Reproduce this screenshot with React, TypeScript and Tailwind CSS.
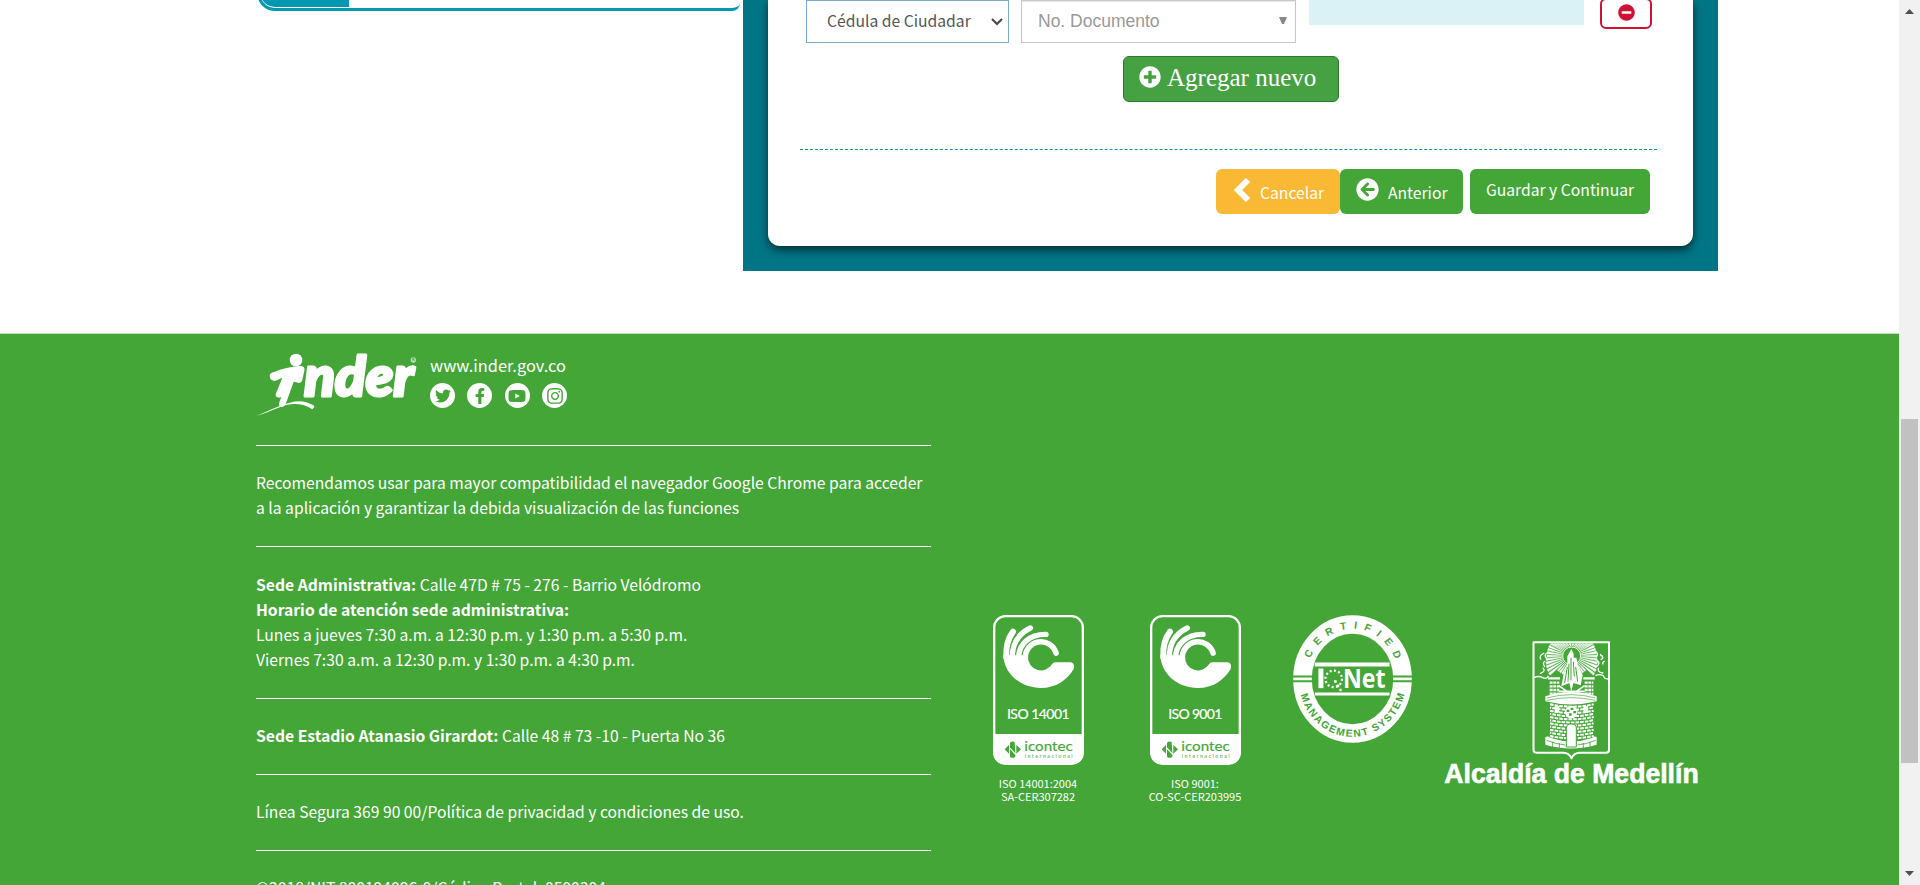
import React from "react";
import {
  FaArrowCircleLeft,
  FaFacebookF,
  FaInstagram,
  FaMinusCircle,
  FaPlusCircle,
  FaTwitter,
  FaYoutube,
} from "react-icons/fa";

const GREEN = "#43a637";

function InderLogo() {
  return (
    <svg className="h-[65px] w-[161px] overflow-visible" viewBox="47 65 483 195" fill="#fff">
      <circle cx="167" cy="89" r="19" />
      <path d="M88 135Q90 126 104 124Q138 110 176 107Q196 106 192 122L186 148Q182 162 168 156L160 154L138 216Q134 230 122 230Q114 228 117 216L123 200Q106 206 106 192L126 142L104 152Q88 152 88 135Z" />
      <path d="M48 257C95 237 145 211 182 213C205 216 224 226 222 230L216 237C190 218 150 216 118 231C92 242 68 251 48 257Z" />
      <text
        x="192"
        y="196"
        textLength="328"
        lengthAdjust="spacingAndGlyphs"
        fontFamily="Lato, sans-serif"
        fontWeight="900"
        fontStyle="italic"
        fontSize="163"
        stroke="#fff"
        strokeWidth="9"
        strokeLinejoin="round"
      >
        nder
      </text>
      <circle cx="519" cy="89" r="8" fillOpacity=".65" />
      <text x="519" y="93" textAnchor="middle" fontFamily="Liberation Sans, sans-serif" fontWeight="700" fontSize="11" fill={GREEN}>
        R
      </text>
    </svg>
  );
}

function IcontecSeal({ label, labelWidth }: { label: string; labelWidth: number }) {
  return (
    <svg className="h-[150px] w-[91px]" viewBox="67 45 273 450">
      <rect x="70.5" y="48.5" width="266" height="443" rx="34" fill="none" stroke="#fff" strokeWidth="7" />
      <path d="M70 402H337V458Q337 492 303 492H104Q70 492 70 458Z" fill="#fff" />
      <path
        d="M98 165C100 222 150 264 211 264C255 264 290 240 309 207Q314 188 298 187H252Q247 188 244 193A39 39 0 0 1 172 171L158 166Z"
        fill="#fff"
      />
      <g fill="none" stroke="#fff" strokeLinecap="round">
        <path d="M107 172C105 140 112 115 127 95" strokeWidth="18" />
        <path d="M125 174C124 132 142 102 179 84" strokeWidth="16" />
        <path d="M144 176C142 132 178 102 226 103" strokeWidth="16" />
        <path d="M164 175A47 47 0 0 1 256 159" strokeWidth="17" />
      </g>
      <text
        x="203"
        y="357"
        textAnchor="middle"
        textLength={labelWidth}
        fontFamily="Lato, sans-serif"
        fontSize="42"
        fill="#fff"
        stroke="#fff"
        strokeWidth=".6"
      >
        {label}
      </text>
      <g fill={GREEN}>
        <path d="M102 448L115 435V461Z" />
        <path d="M118 428Q126 421 132 427L134 460L118 442Z" />
        <path d="M118 447L134 465V470Q126 477 118 470Z" />
        <path d="M137 435L151 448L137 461Z" />
        <text
          x="161"
          y="453"
          textLength="145"
          lengthAdjust="spacingAndGlyphs"
          fontFamily="Lato, sans-serif"
          fontSize="39"
          stroke={GREEN}
          strokeWidth=".5"
        >
          icontec
        </text>
        <text x="162" y="474" textLength="144" fontFamily="Lato, sans-serif" fontSize="16" fontWeight="700" fillOpacity=".75">
          internacional
        </text>
      </g>
    </svg>
  );
}

function IqNetSeal() {
  return (
    <svg className="h-[128px] w-[119px]" viewBox="40 44 357 385">
      <ellipse cx="218.500" cy="236.500" rx="150.500" ry="164" fill="none" stroke="#fff" strokeWidth="56" />
      <path d="M38 229H100M38 243H100M338 229H400M338 243H400" stroke={GREEN} strokeWidth="6" />
      <path d="M105 193H330" stroke="#fff" strokeWidth="12" />
      <path d="M105 281.500H330" stroke="#fff" strokeWidth="9" />
      <defs>
        <path id="seal-top" d="M79.500 236.500A139 151 0 0 1 357.500 236.500" />
        <path id="seal-bottom" d="M56.500 236.500A162 174 0 0 0 380.500 236.500" />
      </defs>
      <g fill={GREEN} fontFamily="Liberation Sans, sans-serif" fontWeight="700" fontSize="31" textAnchor="middle">
        <text letterSpacing="21">
          <textPath href="#seal-top" startOffset="52.500%">CERTIFIED</textPath>
        </text>
        <text letterSpacing="4.500">
          <textPath href="#seal-bottom" startOffset="50.5%">MANAGEMENT SYSTEM</textPath>
        </text>
      </g>
      <g fill="#fff" fontFamily="Open Sans, sans-serif" fontWeight="700" fontSize="82">
        <rect x="116" y="205" width="15" height="59" />
        <text x="190" y="264" textLength="128" lengthAdjust="spacingAndGlyphs">Net</text>
      </g>
      <circle cx="162" cy="236" r="25" fill="none" stroke="#fff" strokeWidth="7" strokeDasharray="6 7.080" />
      <path d="M163 240h8v8h-8zM171 253h8v8h-8zM179 266h7v7h-7z" fill="#fff" />
    </svg>
  );
}

const RAYS = Array.from({ length: 46 }, (_, i) => {
  const a = (i / 46) * Math.PI * 2;
  const s = Math.sin(a);
  const r = s > 0.7 ? 60 : 74 + 20 * Math.max(0, s);
  const spread = 0.042;
  const y = (angle: number) => Math.max(70, 107 + r * Math.sin(angle));
  return `M${425 + 29 * Math.cos(a)} ${107 + 29 * s}L${425 + r * Math.cos(a - spread)} ${y(a - spread)}L${425 + r * Math.cos(a + spread)} ${y(a + spread)}Z`;
}).join("");

const BRICKS = Array.from({ length: 11 }, (_, i) => i);

function MedellinCrest() {
  return (
    <svg className="h-[144px] w-[255px] overflow-visible" viewBox="42 62 765 432">
      <path
        d="M310.500 66H537V388Q537 397 528 397H449Q432 397 424.500 414Q417 397 400 397H320Q310.500 397 310.500 388Z"
        fill="none"
        stroke="#fff"
        strokeWidth="6"
        strokeLinejoin="round"
      />
      <path d={RAYS} fill="#fff" stroke="#fff" strokeWidth="1.500" />
      <circle cx="425" cy="107" r="27" fill={GREEN} stroke="#fff" strokeWidth="3" />
      <path d="M424 86L431 100V112L439 112L444 135L458 165L452 195L430 188L424 214L418 188L394 198L400 165L412 130V108Z" fill="#fff" />
      <path d="M423 112V180M412 140L404 188M437 140L443 184M430 124L433 168M417 130L414 184" stroke={GREEN} strokeWidth="3" />
      <g fill="none" stroke="#fff" strokeWidth="4">
        <path d="M313 172Q325 165 338 172Q350 178 355 166M330 160Q350 152 338 142M345 140Q335 128 346 122M350 115Q340 103 352 98M333 118Q325 105 343 98" />
        <path d="M536 176Q523 177 520 166Q508 160 496 166M520 158Q500 156 506 142M500 138Q514 128 500 120M512 118Q526 112 510 102M498 112Q508 98 494 92M524 122Q514 128 520 132" />
      </g>
      <g stroke="#fff" strokeWidth="5">
        <path d="M354 174H390M460 174H494" strokeWidth="7" />
        <path d="M359 187H388M359 198H388M359 209H388M359 220H388M464 187H490M464 198H490M464 209H490M464 220H490" strokeWidth="7" strokeDasharray="9 2" />
        <path d="M386 196L412 214M438 214L464 196M386 213H464" />
      </g>
      <path d="M346 228Q424 202 500 228V243Q424 262 346 243Z" fill="#fff" />
      <path d="M350 233Q424 213 496 233M350 240Q424 224 496 240" fill="none" stroke={GREEN} strokeWidth="2" />
      <g fill="none" stroke="#fff" strokeWidth="6">
        {BRICKS.map((i) => (
          <path key={i} d={`M360 ${252 + i * 9.5}Q424 ${266 + i * 9.5} 491 ${252 + i * 9.5}`} strokeDasharray="11 3" strokeDashoffset={i % 2 ? 7 : 0} />
        ))}
      </g>
      <g fill="#fff">
        <path d="M374 257h14v20h-14zM460 257h14v20h-14z" />
        <circle cx="424" cy="275" r="19" />
        <path d="M346 350Q354 346 361 352Q424 374 488 352Q494 346 500 350V373Q424 396 346 373Z" />
        <path d="M409 380V322Q410 311 424 311Q438 311 439 322V380Z" stroke={GREEN} strokeWidth="3" />
      </g>
      <path d="M410 268h8v7h-8zM422 262h8v7h-8zM430 272h8v7h-8zM417 279h8v7h-8z" fill={GREEN} />
      <path d="M350 360Q380 372 406 374M442 374Q470 372 497 360M368 364V380M388 368V384M460 368V384M480 364V380" fill="none" stroke={GREEN} strokeWidth="2.500" />
      <text
        x="43"
        y="487"
        textLength="763"
        lengthAdjust="spacingAndGlyphs"
        fontFamily="Liberation Sans, sans-serif"
        fontWeight="700"
        fontSize="84"
        fill="#fff"
        stroke="#fff"
        strokeWidth="2"
      >
        Alcaldía de Medellín
      </text>
    </svg>
  );
}

function SocialIcon({ children }: { children: React.ReactNode }) {
  return (
    <a className="flex size-[25px] items-center justify-center rounded-full bg-white text-[#43a637]">{children}</a>
  );
}

function FormPanel() {
  return (
    <section className="h-[271px] w-[975px] bg-[#007585] pr-[25px] pl-[25px]">
      <div className="h-[246px] rounded-b-[12px] bg-white pr-[36px] pl-8 shadow-[0_4px_9px_rgba(0,0,0,0.6)]">
        <div className="flex h-[43px] items-start pl-[6px]">
          <div className="flex h-[43px] w-[203px] shrink-0 items-center justify-between border border-[#7aaccb] pr-[5px] pl-5 text-[#555]">
            <span className="relative -top-px text-[15.7px] whitespace-nowrap">Cédula de Ciudadar</span>
            <svg className="h-[8px] w-[12px]" viewBox="0 0 12 8" fill="none" stroke="#444" strokeWidth="2">
              <path d="M1 1L6 6L11 1" />
            </svg>
          </div>
          <div className="ml-3 flex h-[43px] w-[275px] shrink-0 items-center justify-between border border-[#c8c8c8] pr-[8px] pl-4 font-['Liberation_Sans',sans-serif] shadow-[inset_0_1px_1px_rgba(0,0,0,0.1)]">
            <span className="text-[17.5px] text-[#999]">No. Documento</span>
            <svg className="relative -top-px h-[7px] w-[8px]" viewBox="0 0 8 7">
              <path d="M0 0H8L5 7H3Z" fill="#888" />
            </svg>
          </div>
          <div className="ml-[13px] h-[25px] w-[275px] shrink-0 bg-[#daf2f6]" />
          <button className="ml-4 -mt-[2px] flex h-[31px] w-[52px] shrink-0 items-center justify-center rounded-[6px] border-2 border-[#d01035] text-[#d01035]">
            <FaMinusCircle className="relative -top-px size-[17px]" />
          </button>
        </div>
        <button className="mt-[13px] ml-[323px] flex h-[46px] w-[216px] items-center gap-[6px] rounded-[6px] border border-[#2b7a2b] bg-[#46a143] pb-[3px] pl-[15px] font-['Liberation_Serif',serif] text-[25px] text-white">
          <FaPlusCircle className="relative -top-px size-[22px]" />
          <span className="whitespace-nowrap">Agregar nuevo</span>
        </button>
        <div className="mt-[47px] border-t border-dashed border-[#0398ae]" />
        <div className="mt-[19px] flex justify-end pr-[7px] text-[15.7px] text-white">
          <button className="flex h-[45px] w-[124px] items-center rounded-[6px] bg-[#f9b935] pl-[18px]">
            <svg className="relative -top-[2px] h-[24px] w-[17px]" viewBox="0 0 17 24" fill="none" stroke="#fff" strokeWidth="6">
              <path d="M14 2L4 12L14 22" />
            </svg>
            <span className="relative top-px ml-[9px]">Cancelar</span>
          </button>
          <button className="flex h-[45px] w-[123px] items-center rounded-[6px] bg-[#43a637] pl-4">
            <FaArrowCircleLeft className="relative -top-[2px] size-[23px]" />
            <span className="relative top-px ml-[9px]">Anterior</span>
          </button>
          <button className="ml-[7px] h-[45px] w-[180px] rounded-[6px] bg-[#43a637] pb-[3px] whitespace-nowrap">
            Guardar y Continuar
          </button>
        </div>
      </div>
    </section>
  );
}

function Footer() {
  return (
    <footer className="flex h-[552px] items-start overflow-hidden border-t border-[#c9dcc6] bg-[#43a637] pl-[256px] text-white">
      <div className="w-[675px] shrink-0 text-[15.68px] leading-[25px]">
        <div className="flex h-[111px] pt-[18px]">
          <InderLogo />
          <div className="ml-[13px] pt-[1px]">
            <p className="text-[16.4px]">www.inder.gov.co</p>
            <div className="mt-[5px] flex gap-[12.400px]">
              <SocialIcon><FaTwitter className="size-[16px]" /></SocialIcon>
              <SocialIcon><FaFacebookF className="size-[16px]" /></SocialIcon>
              <SocialIcon><FaYoutube className="size-[18px]" /></SocialIcon>
              <SocialIcon><FaInstagram className="size-[18px]" /></SocialIcon>
            </div>
          </div>
        </div>
        <div className="border-t border-white pt-[24px] pb-[26px]">
          <p className="whitespace-nowrap">Recomendamos usar para mayor compatibilidad el navegador Google Chrome para acceder</p>
          <p>a la aplicación y garantizar la debida visualización de las funciones</p>
        </div>
        <div className="border-t border-white pt-[25px] pb-[26px]">
          <p><b>Sede Administrativa:</b> Calle 47D # 75 - 276 - Barrio Velódromo</p>
          <p><b>Horario de atención sede administrativa:</b></p>
          <p>Lunes a jueves 7:30 a.m. a 12:30 p.m. y 1:30 p.m. a 5:30 p.m.</p>
          <p>Viernes 7:30 a.m. a 12:30 p.m. y 1:30 p.m. a 4:30 p.m.</p>
        </div>
        <div className="border-t border-white pt-[24px] pb-[26px]">
          <p><b>Sede Estadio Atanasio Girardot:</b> Calle 48 # 73 -10 - Puerta No 36</p>
        </div>
        <div className="border-t border-white pt-[24px] pb-[26px]">
          <p>Línea Segura 369 90 00/Política de privacidad y condiciones de uso.</p>
        </div>
        <div className="border-t border-white pt-[24px]">
          <p>©2018/NIT 800194096-0/Código Postal: 0500304</p>
        </div>
      </div>
      <div className="flex shrink-0 items-start pt-[281px] pl-[42.5px] text-center text-[11px] leading-[13px] whitespace-nowrap">
        <div className="flex w-[129px] flex-col items-center">
          <IcontecSeal label="ISO 14001" labelWidth={188} />
          <p className="mt-[12px]">ISO 14001:2004<br />SA-CER307282</p>
        </div>
        <div className="ml-7 flex w-[129px] flex-col items-center">
          <IcontecSeal label="ISO 9001" labelWidth={162} />
          <p className="mt-[12px]">ISO 9001:<br />CO-SC-CER203995</p>
        </div>
        <div className="ml-[33.5px]"><IqNetSeal /></div>
        <div className="mt-[26px] ml-[32px]"><MedellinCrest /></div>
      </div>
    </footer>
  );
}

function Scrollbar() {
  return (
    <div className="flex h-full w-[21px] shrink-0 flex-col items-center bg-[#f1f1f1]">
      <svg className="mt-[9px] h-[5px] w-[9px] shrink-0" viewBox="0 0 9 5"><path d="M4.500 0L9 5H0Z" fill="#505050" /></svg>
      <div className="mt-[405px] h-[344px] w-[17px] shrink-0 bg-[#c1c1c1]" />
      <svg className="mt-[108px] h-[5px] w-[9px] shrink-0" viewBox="0 0 9 5"><path d="M0 0H9L4.500 5Z" fill="#505050" /></svg>
    </div>
  );
}

export default function App() {
  return (
    <div className="flex h-[885px] w-full overflow-hidden bg-white font-['Noto_Sans_CJK_SC',sans-serif]">
      <main className="w-[1899px] shrink-0">
        <div className="flex h-[333px] items-start pl-[257px]">
          <div className="mr-[3px] h-[11px] w-[483px] overflow-hidden">
            <div className="-mt-[30px] h-[41px] rounded-bl-[18px] rounded-br-[8px] border-b-[3px] border-l-[3px] border-[#0398b2] pb-px">
              <div className="h-[37px] w-[89px] rounded-bl-[15px] bg-[#0398b2]" />
            </div>
          </div>
          <FormPanel />
        </div>
        <Footer />
      </main>
      <Scrollbar />
    </div>
  );
}
